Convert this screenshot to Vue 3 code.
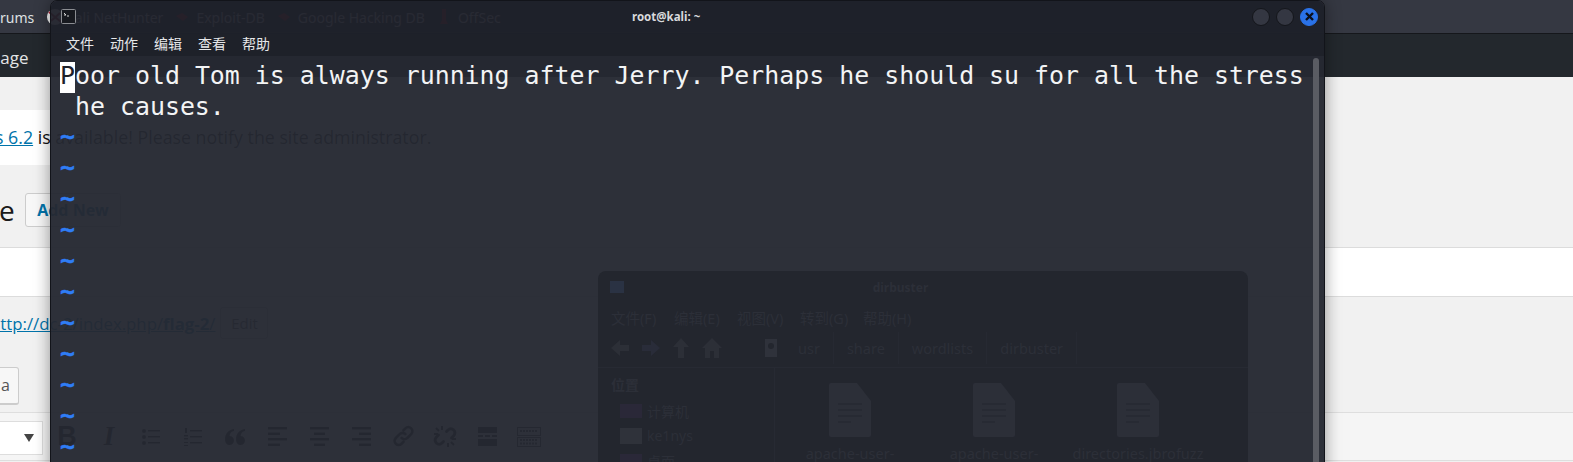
<script setup>
const bookmarks = [
  { label: 'Kali NetHunter', kind: 'kali' },
  { label: 'Exploit-DB', kind: 'bug' },
  { label: 'Google Hacking DB', kind: 'bug' },
  { label: 'OffSec', kind: 'off' },
]
const menus = ['文件', '动作', '编辑', '查看', '帮助']
const tildes = Array.from({ length: 11 })
const fmMenus = ['文件(F)', '编辑(E)', '视图(V)', '转到(G)', '帮助(H)']
const crumbs = ['usr', 'share', 'wordlists', 'dirbuster']
const files = ['apache-user-', 'apache-user-', 'directories.jbrofuzz']
</script>

<template>
  <div class="page">
    <header class="browser-bar">
      <span class="clip-text">rums</span>
      <svg class="kali-logo" width="16" height="16" viewBox="0 0 16 16">
        <circle cx="8" cy="8" r="8" fill="#f4f4f4" />
        <path d="M2 3 14 13M4 12 13 4" stroke="#b3283c" stroke-width="2" />
      </svg>
      <div class="bookmarks">
        <span v-for="b in bookmarks" :key="b.label" class="bookmark">
          <svg v-if="b.kind === 'bug'" width="16" height="16" viewBox="0 0 16 16">
            <path d="M2 7 8 4 14 8 9 12Z" fill="#c4302b" />
          </svg>
          <svg v-else-if="b.kind === 'off'" width="16" height="16" viewBox="0 0 16 16">
            <path d="M6 0h4v11l2 4H4l2-4Z" fill="#c4302b" />
          </svg>
          <span v-else class="kali-gap"></span>
          {{ b.label }}
        </span>
      </div>
    </header>
    <nav class="admin-bar"><span class="page-label">Page</span></nav>

    <main class="wp">
      <div class="notice"><a href="#" class="notice-link">s 6.2</a> is available! Please notify the site administrator.</div>
      <div class="title-row">
        <h1>e</h1>
        <span class="add-new">Add New</span>
      </div>
      <div class="band"></div>
      <div class="permalink">
        <a href="#">http://dc-2/index.php/<b>flag-2</b>/</a>
        <span class="edit-btn">Edit</span>
      </div>
      <div class="media-btn">a</div>
      <div class="toolbar">
        <div class="select"><i class="arrow"></i></div>
        <div class="tools">
          <span class="tool glyph-b">B</span>
          <span class="tool glyph-i">I</span>
          <span class="tool">
            <svg width="18" height="20" viewBox="0 0 18 20"><g fill="#151515"><circle cx="2" cy="4" r="2" /><circle cx="2" cy="10" r="2" /><circle cx="2" cy="16" r="2" /><path d="M6 3h12v1.500H6zM6 9h12v1.500H6zM6 15h12v1.500H6z" /></g></svg>
          </span>
          <span class="tool">
            <svg width="18" height="20" viewBox="0 0 18 20"><g fill="#151515"><path d="M1 1h2v5H1zM0 8h4v1.500H0zM0 11h4v1.500H0zM0 15h4v1H0zM0 18h4v1H0zM6 3h12v1.500H6zM6 9h12v1.500H6zM6 15h12v1.500H6z" /></g></svg>
          </span>
          <span class="tool">
            <svg width="20" height="16" viewBox="0 0 20 16"><path fill="#151515" d="M9 0C3 1 0 5 0 10c0 4 2 6 4.500 6S9 14 9 11.500 7 7 4.500 7C5 4 6.500 2.500 9 2ZM20 0c-6 1-9 5-9 10 0 4 2 6 4.500 6s4.500-2 4.500-4.500S18 7 15.500 7c.5-3 2-4.500 4.500-5Z" /></svg>
          </span>
          <span class="tool">
            <svg width="19" height="19" viewBox="0 0 19 19"><path fill="#151515" d="M0 0h19v2.500H0zM0 5.500h12V8H0zM0 11h19v2.500H0zM0 16.500h12V19H0z" /></svg>
          </span>
          <span class="tool">
            <svg width="19" height="19" viewBox="0 0 19 19"><path fill="#151515" d="M0 0h19v2.500H0zM4 5.500h11V8H4zM0 11h19v2.500H0zM4 16.500h11V19H4z" /></svg>
          </span>
          <span class="tool">
            <svg width="19" height="19" viewBox="0 0 19 19"><path fill="#151515" d="M0 0h19v2.500H0zM7 5.500h12V8H7zM0 11h19v2.500H0zM7 16.500h12V19H7z" /></svg>
          </span>
          <span class="tool">
            <svg width="23" height="23" viewBox="0 0 24 24"><path fill="none" stroke="#151515" stroke-width="2.800" stroke-linecap="round" d="M10 13.500a4 4 0 0 0 6 0l4-4a4 4 0 0 0-6-6l-2 2M14 9.500a4 4 0 0 0-6 0l-4 4a4 4 0 0 0 6 6l2-2" /></svg>
          </span>
          <span class="tool">
            <svg width="24" height="23" viewBox="0 0 24 23"><g fill="none" stroke="#151515"><path stroke-width="3" stroke-linecap="round" d="M13.500 6.500 15 5a4 4 0 0 1 5.700 5.700L18.500 13M10.500 16.500 9 18a4 4 0 0 1-5.700-5.700L5.500 10" /><path stroke-width="2" d="M9 1v4M3 3l3 3M1 9h4M15 22v-4M21 20l-3-3M23 14h-4" /></g></svg>
          </span>
          <span class="tool">
            <svg width="19" height="19" viewBox="0 0 19 19"><path fill="#151515" d="M0 0h19v6H0zM0 8h5v2H0zM7 8h5v2H7zM14 8h5v2h-5zM0 12h19v7H0z" /></svg>
          </span>
          <span class="tool">
            <svg width="24" height="20" viewBox="0 0 24 20"><g fill="none" stroke="#1a1a1a"><rect x=".5" y=".5" width="23" height="8" /><rect x=".5" y="10.500" width="23" height="9" /><path stroke-width="2" stroke-dasharray="2 1" d="M3 4h18M3 13h18M3 16.500h18" /></g></svg>
          </span>
        </div>
      </div>
    </main>

    <section class="terminal">
      <div class="filemanager">
        <div class="fm-title">
          <i class="fm-appicon"></i>
          <span class="fm-name">dirbuster</span>
        </div>
        <div class="fm-menu"><span v-for="m in fmMenus" :key="m">{{ m }}</span></div>
        <div class="fm-tools">
          <svg class="fm-nav" width="116" height="24" viewBox="0 0 116 24">
            <path fill="#2c2f37" d="M1 12 10 4v5h9v6h-9v5Z" />
            <path fill="#292c39" d="M50 12 41 4v5h-9v6h9v5Z" />
            <path fill="#2c2f37" d="M71 2l8 9h-5v11h-6V11h-5Z" />
            <path fill="#2c2f37" d="M102 2l10 10h-3v10h-5v-7h-4v7h-5V12h-3Z" />
          </svg>
          <svg class="fm-pin" width="14" height="20" viewBox="0 0 14 20"><rect width="12" height="18" y="1" fill="#2f323b" /><circle cx="6" cy="8" r="3" fill="#23262e" /></svg>
          <div class="crumbs"><span v-for="c in crumbs" :key="c">{{ c }}</span></div>
        </div>
        <div class="fm-main">
          <aside class="fm-side">
            <div class="fm-heading">位置</div>
            <div class="fm-place"><i class="fm-pc"></i>计算机</div>
            <div class="fm-place"><i class="fm-home"></i>ke1nys</div>
            <div class="fm-place"><i class="fm-pc"></i>桌面</div>
          </aside>
          <div class="fm-files">
            <div v-for="(f, i) in files" :key="i" class="fm-file">
              <svg width="42" height="54" viewBox="0 0 42 54">
                <path fill="#2c2f38" d="M2 0h26l14 18v34a2 2 0 0 1-2 2H2a2 2 0 0 1-2-2V2a2 2 0 0 1 2-2Z" />
                <path stroke="#23262e" stroke-width="1" d="M9 21h24M9 27h24M9 33h24M9 39h13" />
              </svg>
              <span>{{ f }}</span>
            </div>
          </div>
        </div>
      </div>

      <div class="term-title">
        <svg class="term-icon" width="15" height="15" viewBox="0 0 15 15">
          <rect x=".5" y=".5" width="14" height="14" rx="1" fill="#17191f" stroke="#8b8d92" />
          <path d="M3 4l2 2-2 0" fill="none" stroke="#d5d5d5" />
          <path d="M6 7h2" stroke="#d5d5d5" />
        </svg>
        <span class="term-name">root@kali: ~</span>
        <div class="win-buttons">
          <i class="win-btn"></i>
          <i class="win-btn"></i>
          <i class="win-btn close">
            <svg width="9" height="9" viewBox="0 0 9 9"><path d="M1 1l7 7M8 1 1 8" stroke="#0b0f1a" stroke-width="2.400" /></svg>
          </i>
        </div>
      </div>
      <div class="term-menu"><span v-for="m in menus" :key="m">{{ m }}</span></div>
      <div class="term-body">
        <div class="vim-line"><span class="cursor">P</span>oor old Tom is always running after Jerry. Perhaps he should su for all the stress</div>
        <div class="vim-line"> he causes.</div>
        <div v-for="(t, i) in tildes" :key="i" class="vim-line tilde">~</div>
      </div>
      <div class="scrollbar"></div>
    </section>
  </div>
</template>

<style scoped>
.page {
  position: relative;
  width: 1573px;
  height: 462px;
  overflow: hidden;
  background: #f1f1f1;
  font-family: "Open Sans", "Noto Sans", sans-serif;
  color: #23282d;
}
.browser-bar {
  height: 33px;
  background: #353842;
  border-bottom: 1px solid #15171b;
  display: flex;
  align-items: center;
  color: #dfe0e3;
  font-family: "Noto Sans", sans-serif;
  font-size: 14px;
}
.clip-text { width: 34px; margin-right: 13px; padding-top: 1px; }
.kali-logo { flex: none; }
.bookmarks { display: flex; gap: 11px; margin-left: -16px; }
.bookmark { display: flex; align-items: center; gap: 6px; padding-top: 1px; }
.kali-gap { width: 13px; }
.admin-bar {
  height: 43px;
  background: #23282d;
  display: flex;
  align-items: center;
  color: #e4e5e6;
  font-size: 17px;
}
.page-label { margin-left: -10px; padding-top: 3px; }
.wp { display: flex; flex-direction: column; }
.notice {
  align-self: flex-start;
  margin-top: 33px;
  height: 55px;
  width: 445px;
  box-sizing: border-box;
  background: #fff;
  font-size: 17.800px;
  line-height: 55px;
  white-space: nowrap;
  color: #111;
  overflow: hidden;
}
.notice-link { margin-left: -5px; }
a { color: #0073aa; text-decoration: underline; }
.title-row {
  margin-top: 28px;
  height: 34px;
  display: flex;
  align-items: center;
}
h1 {
  margin: 0 0 0 -1px;
  font-size: 28px;
  font-weight: 400;
  color: #1a1a1a;
  width: 26px;
  line-height: 34px;
}
.add-new {
  box-sizing: border-box;
  width: 96px;
  height: 34px;
  border: 1px solid #ccc;
  border-radius: 3px;
  background: #f7f7f7;
  color: #0073aa;
  font-size: 16px;
  font-weight: 700;
  line-height: 32px;
  text-align: center;
}
.band {
  margin-top: 20px;
  height: 50px;
  box-sizing: border-box;
  background: #fff;
  border-top: 1px solid #dcdcdc;
  border-bottom: 1px solid #dcdcdc;
}
.permalink {
  margin-top: 10px;
  height: 32px;
  margin-left: -10px;
  display: flex;
  align-items: center;
  gap: 5px;
  font-size: 16.800px;
  white-space: nowrap;
}
.permalink b { font-weight: 700; }
.edit-btn {
  box-sizing: border-box;
  width: 48px;
  height: 32px;
  border: 1px solid #b5b5b5;
  border-radius: 3px;
  text-align: center;
  line-height: 30px;
  font-size: 15px;
  color: #444;
}
.media-btn {
  box-sizing: border-box;
  margin-top: 28px;
  width: 19px;
  height: 38px;
  padding-left: 1px;
  border: 1px solid #ccc;
  border-left: 0;
  border-bottom-width: 2px;
  border-radius: 0 3px 3px 0;
  background: #f7f7f7;
  color: #555;
  font-size: 16px;
  line-height: 35px;
}
.toolbar {
  box-sizing: border-box;
  margin-top: 7px;
  height: 49px;
  background: #f5f5f5;
  border-top: 1px solid #dedede;
  border-bottom: 1px solid #dedede;
  display: flex;
  align-items: center;
}
.select {
  box-sizing: border-box;
  width: 43px;
  height: 34px;
  margin-top: 8px;
  margin-bottom: 5px;
  background: #fff;
  border: 1px solid #ddd;
  border-left: 0;
  position: relative;
  display: flex;
  align-items: center;
  justify-content: flex-end;
  padding-right: 8px;
}
.arrow {
  width: 0;
  height: 0;
  border-left: 5px solid transparent;
  border-right: 5px solid transparent;
  border-top: 8px solid #444;
}
.tools { display: flex; margin-left: 3px; }
.tool {
  width: 42px;
  height: 24px;
  display: flex;
  align-items: center;
  justify-content: center;
  color: #111;
}
.glyph-b { font: 700 27px "Liberation Sans", sans-serif; }
.glyph-i { font: italic 700 27px "Liberation Serif", serif; }

.terminal {
  position: absolute;
  left: 50px;
  top: 0;
  width: 1275px;
  height: 480px;
  box-sizing: border-box;
  border: 1px solid #12141a;
  border-radius: 7px 7px 0 0;
  box-shadow: 0 0 16px rgba(0, 0, 0, 0.4);
  display: flex;
  flex-direction: column;
}
.term-title {
  height: 31px;
  flex: none;
  background: rgba(29, 32, 41, 0.95);
  border-radius: 6px 6px 0 0;
  display: flex;
  align-items: center;
  color: #d8d9dc;
  position: relative;
}
.term-icon { margin-left: 10px; flex: none; }
.term-name {
  position: absolute;
  left: 581px;
  font: 700 11.500px "Noto Sans", sans-serif;
  line-height: 32px;
  top: 0;
}
.win-buttons { margin-left: auto; margin-right: 6px; display: flex; gap: 6px; }
.win-btn {
  box-sizing: border-box;
  width: 18px;
  height: 18px;
  border-radius: 50%;
  background: #343742;
  border: 1px solid #14161b;
  display: flex;
  align-items: center;
  justify-content: center;
}
.win-btn.close { background: #2a72e8; border-color: #2a72e8; }
.term-menu {
  height: 23px;
  flex: none;
  background: rgba(30, 33, 42, 0.96);
  display: flex;
  gap: 16px;
  padding-left: 15px;
  padding-bottom: 1px;
  box-sizing: content-box;
  align-items: flex-start;
  line-height: 22px;
  color: #e6e7e9;
  font-family: "Noto Sans CJK SC", "Noto Sans", sans-serif;
  font-size: 14px;
}
.term-body {
  flex: 1;
  background: rgba(37, 40, 50, 0.965);
  padding: 6px 0 0 9px;
  font-family: "DejaVu Sans Mono", monospace;
  font-size: 24.900px;
  color: #f3f4f5;
  white-space: pre;
}
.vim-line { height: 31px; line-height: 27px; position: relative; z-index: 2; }
.cursor { display: inline-block; height: 31px; vertical-align: top; background: #fff; color: #1d2029; }
.tilde { color: #2f7df6; font-weight: 700; line-height: 26px; -webkit-text-stroke: 0.4px #2f7df6; }
.scrollbar {
  position: absolute;
  left: 1262px;
  top: 57px;
  width: 6px;
  height: 430px;
  border-radius: 3px;
  background: #5a5c63;
}
.filemanager {
  position: absolute;
  left: 547px;
  top: 270px;
  width: 650px;
  height: 240px;
  z-index: 1;
  border-radius: 8px;
  background: #23262e;
  color: #2c2f38;
  display: flex;
  flex-direction: column;
  font-family: "Noto Sans", "Noto Sans CJK SC", sans-serif;
  font-size: 15px;
}
.fm-title { height: 32px; display: flex; align-items: center; }
.fm-appicon { width: 14px; height: 12px; margin-left: 12px; background: #2a3243; flex: none; }
.fm-name { flex: 1; text-align: center; padding-right: 71px; font-weight: 700; font-size: 12px; }
.fm-menu { height: 28px; display: flex; gap: 15px; padding-left: 13px; align-items: center; font-size: 14.500px; white-space: nowrap; }
.fm-menu span { width: 48px; }
.fm-tools {
  height: 34px;
  display: flex;
  align-items: center;
  border-bottom: 1px solid #272a33;
  padding-bottom: 2px;
  box-sizing: content-box;
}
.fm-nav { margin-left: 12px; flex: none; }
.fm-pin { margin-left: 39px; flex: none; }
.crumbs { display: flex; margin-left: 6px; font-size: 14.500px; }
.crumbs span { padding: 0 13px; border-right: 1px solid #262932; line-height: 32px; }
.fm-main { flex: 1; display: flex; }
.fm-side { width: 177px; flex: none; box-sizing: border-box; padding: 5px 0 0 13px; border-right: 1px solid #272a33; }
.fm-heading { font-weight: 700; font-size: 14px; height: 25px; line-height: 24px; }
.fm-place { height: 25px; display: flex; align-items: center; gap: 5px; padding-left: 9px; font-size: 14px; }
.fm-pc { width: 22px; height: 14px; background: #2a2838; flex: none; }
.fm-home { width: 22px; height: 16px; background: #2f323a; flex: none; }
.fm-files { flex: 1; display: flex; padding-top: 15px; padding-left: 3px; }
.fm-file { width: 144px; flex: none; display: flex; flex-direction: column; align-items: center; gap: 6px; white-space: nowrap; font-size: 14.500px; }
</style>
<style>
html, body { margin: 0; background: #f1f1f1; overflow: hidden; }
</style>
